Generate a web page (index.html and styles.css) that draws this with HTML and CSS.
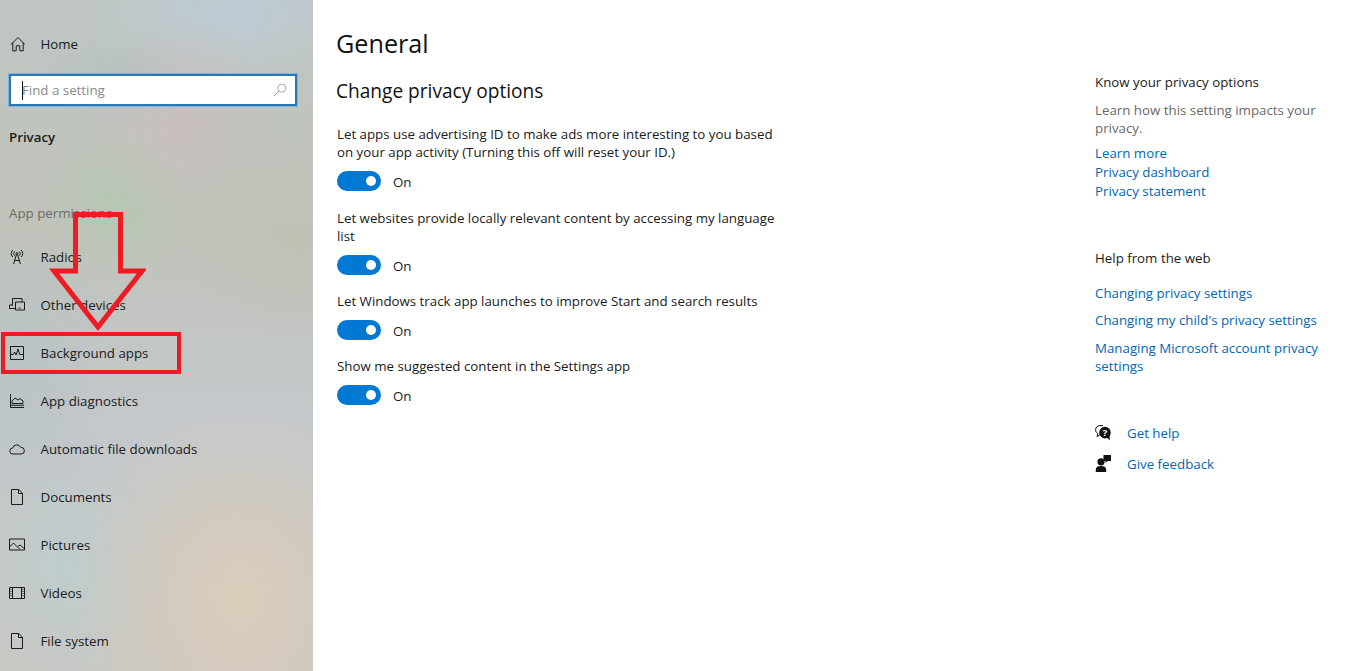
FILE: index.html
```html
<!DOCTYPE html>
<html lang="en">
<head>
<meta charset="utf-8">
<title>Settings - Privacy</title>
<link rel="stylesheet" href="styles.css">
</head>
<body>
<div class="app">
  <aside class="sidebar">
    <div class="nav-item home">
      <svg class="icon" viewBox="0 0 16 16"><path d="M2 8.500 9 1.500l6.800 7M3.800 6.500v8.300h3.400V9.800h3.600v5h3.400V6.500"/></svg>
      <span>Home</span>
    </div>
    <div class="search">
      <span class="caret"></span>
      <span class="placeholder">Find a setting</span>
      <svg class="search-icon" viewBox="0 0 14 14"><circle cx="8.800" cy="5.200" r="4"/><path d="M5.900 8 1 13"/></svg>
    </div>
    <div class="section-title">Privacy</div>
    <div class="group-label">App permissions</div>
    <nav class="nav-list">
      <div class="nav-item">
        <svg class="icon" viewBox="0 0 16 16"><circle cx="8" cy="4.600" r="1"/><path d="M7.400 5.600 4.600 15M8.600 5.600l2.800 9.400M5.600 11.500h4.800M5.600 6.600a3 3 0 0 1 0-4.200M10.400 2.400a3 3 0 0 1 0 4.200M3.800 8a5.200 5.200 0 0 1 0-7M12.200 1a5.200 5.200 0 0 1 0 7"/></svg>
        <span>Radios</span>
      </div>
      <div class="nav-item">
        <svg class="icon" viewBox="0 0 16 16"><path d="M3.500 8.500V1.500h9.500v3.500M3.500 8H.5v3.500h6M6.500 5h9v8h-9zM9.500 11h2"/></svg>
        <span>Other devices</span>
      </div>
      <div class="nav-item">
        <svg class="icon" viewBox="0 0 16 16"><path d="M1.500 1.500h13v13h-13zM2 9.500h2.200l1.400-2.500 1.500 3L9 4l1.800 5.500H14"/></svg>
        <span>Background apps</span>
      </div>
      <div class="nav-item">
        <svg class="icon" viewBox="0 0 16 16"><path d="M1.500 1v13.500H15M1.500 12.300H15M3 10.500V8l3-3 3 2 2-1.500 3 2.500v2.500z"/></svg>
        <span>App diagnostics</span>
      </div>
      <div class="nav-item">
        <svg class="icon" viewBox="0 0 16 16"><path d="M4 13a3 3 0 0 1-.4-6A4.400 4.400 0 0 1 11.800 6.400 3.300 3.300 0 0 1 12.400 13z"/></svg>
        <span>Automatic file downloads</span>
      </div>
      <div class="nav-item">
        <svg class="icon" viewBox="0 0 16 16"><path d="M2.500.5h7.300l3.700 3.700v11.300h-11zM9.500.5v4h4"/></svg>
        <span>Documents</span>
      </div>
      <div class="nav-item">
        <svg class="icon" viewBox="0 0 16 16"><path d="M.5 2h15v11H.5zM.5 10l4-4 6.500 6.500M9 9.500l2-1.500 4.500 3.800"/></svg>
        <span>Pictures</span>
      </div>
      <div class="nav-item">
        <svg class="icon" viewBox="0 0 16 16"><path d="M.5 2.500h15v11H.5zM3.500 2.500v11M12.500 2.500v11"/><path class="dots" d="M2 4v8M14 4v8"/></svg>
        <span>Videos</span>
      </div>
      <div class="nav-item">
        <svg class="icon" viewBox="0 0 16 16"><path d="M2.500.5h7.300l3.700 3.700v11.300h-11zM9.500.5v4h4"/></svg>
        <span>File system</span>
      </div>
    </nav>
  </aside>

  <main class="content">
    <section class="options">
      <h1>General</h1>
      <h2>Change privacy options</h2>
      <div class="option">
        <p>Let apps use advertising ID to make ads more interesting to you based on your app activity (Turning this off will reset your ID.)</p>
        <div class="toggle-row"><span class="toggle"></span><span class="state">On</span></div>
      </div>
      <div class="option">
        <p>Let websites provide locally relevant content by accessing my language list</p>
        <div class="toggle-row"><span class="toggle"></span><span class="state">On</span></div>
      </div>
      <div class="option">
        <p>Let Windows track app launches to improve Start and search results</p>
        <div class="toggle-row"><span class="toggle"></span><span class="state">On</span></div>
      </div>
      <div class="option">
        <p>Show me suggested content in the Settings app</p>
        <div class="toggle-row"><span class="toggle"></span><span class="state">On</span></div>
      </div>
    </section>

    <aside class="help">
      <h3>Know your privacy options</h3>
      <p class="muted">Learn how this setting impacts your privacy.</p>
      <ul class="links tight">
        <li><a>Learn more</a></li>
        <li><a>Privacy dashboard</a></li>
        <li><a>Privacy statement</a></li>
      </ul>
      <h3 class="web-title">Help from the web</h3>
      <ul class="links roomy">
        <li><a>Changing privacy settings</a></li>
        <li><a>Changing my child's privacy settings</a></li>
        <li><a>Managing Microsoft account privacy settings</a></li>
      </ul>
      <div class="actions">
        <div class="action">
          <svg class="action-icon" viewBox="0 0 16 16"><path class="outline" d="M8 .6H5C2.400.6.6 2.400.6 4.800c0 1.600.8 2.800 2 3.600l-.4 3.400 3.200-2.600"/><circle class="solid" cx="10" cy="7.600" r="5.800"/><path class="solid" d="M11.500 12l3.300 3.600-.2-5.600z"/><text class="q" x="10" y="11" text-anchor="middle">?</text></svg>
          <a>Get help</a>
        </div>
        <div class="action">
          <svg class="action-icon large" viewBox="0 0 16 17"><circle class="solid" cx="6" cy="6.800" r="3.600"/><path class="solid" d="M.8 17v-2.500c0-2.400 2-3.500 5.200-3.500s5.200 1.100 5.200 3.500V17zM8.500 0H16v6h-3.500l-2 2V6h-2z"/></svg>
          <a>Give feedback</a>
        </div>
      </div>
    </aside>
  </main>
</div>

<div class="highlight"></div>
<svg class="arrow" viewBox="0 0 100 122"><path d="M29.500 5.500H74.500V62H96L52 118 8 62H29.500z"/></svg>
</body>
</html>
```
FILE: styles.css
```css
* { box-sizing: border-box; }
html, body { margin: 0; height: 100%; overflow: hidden; }
body {
  font-family: "Open Sans", "Noto Sans", sans-serif;
  font-size: 13.3px;
  color: #1a1a1a;
  background: #fff;
}
.app { display: flex; height: 671px; }

.sidebar {
  width: 313px;
  flex: none;
  padding: 20px 0 0 9px;
  color: #1b1b1b;
  background:
    radial-gradient(ellipse 100px 110px at 180px 125px, rgba(206,190,190,.65), transparent),
    radial-gradient(ellipse 70px 80px at 120px 200px, rgba(176,200,176,.65), transparent),
    radial-gradient(ellipse 150px 70px at 230px 15px, rgba(190,203,215,.9), transparent),
    radial-gradient(ellipse 90px 50px at 130px 80px, rgba(176,190,196,.7), transparent),
    radial-gradient(ellipse 170px 200px at 240px 600px, rgba(218,204,186,1), transparent),
    radial-gradient(ellipse 90px 120px at 70px 570px, rgba(190,205,205,.9), transparent),
    radial-gradient(ellipse 120px 100px at 300px 240px, rgba(192,192,180,.8), transparent),
    radial-gradient(ellipse 90px 150px at 20px 370px, rgba(182,194,196,.8), transparent),
    linear-gradient(180deg, #bfc6c2 0%, #c0c3ba 35%, #c4c8cc 62%, #c8c8c4 100%);
}
.nav-item {
  display: flex;
  align-items: center;
  height: 48px;
  gap: 15.500px;
  white-space: nowrap;
}
.icon {
  width: 16px;
  height: 16px;
  flex: none;
  fill: none;
  stroke: #1b1b1b;
  stroke-width: 1;
}
.dots { stroke-dasharray: 1 1; }
.search {
  display: flex;
  align-items: center;
  width: 288px;
  height: 32px;
  margin-top: 6px;
  padding: 0 8px 0 11px;
  background: #fff;
  border: 2px solid #2a78b4;
  outline: 1px solid #7cb4de;
}
.caret { width: 1px; height: 19px; background: #111; flex: none; }
.placeholder { flex: 1; color: #8a8a8a; margin-left: -1px; }
.search-icon { width: 14px; height: 14px; fill: none; stroke: #a8a8a8; stroke-width: 1; }
.section-title { margin-top: 21px; font-weight: 600; line-height: 20px; }
.group-label { margin-top: 56px; color: #6b6d68; line-height: 20px; }
.nav-list { margin-top: 10px; }

.content { flex: 1; display: flex; min-width: 0; }
.options { width: 782px; padding-left: 23px; }
h1 { margin: 24px 0 0; font-size: 25.200px; font-weight: 400; line-height: 38px; color: #111; }
h2 { margin: 15px 0 0; font-size: 19.100px; font-weight: 400; line-height: 28px; color: #111; }
.option { width: 445px; margin-left: 1px; margin-top: 16px; }
.option p { margin: 0; line-height: 18px; }
.options h2 + .option { margin-top: 20px; margin-bottom: 17px; }
.toggle-row { display: flex; align-items: center; gap: 12px; margin-top: 9px; height: 22px; }
.state { padding-top: 2px; }
.toggle {
  position: relative;
  width: 44px;
  height: 20px;
  border-radius: 10px;
  background: #0078d4;
}
.toggle::after {
  content: "";
  position: absolute;
  right: 5px;
  top: 5px;
  width: 10px;
  height: 10px;
  border-radius: 50%;
  background: #fff;
}

.help { flex: 1; }
.help h3 { margin: 72px 0 0; font-size: 13.300px; font-weight: 400; line-height: 20px; }
.help h3.web-title { margin-top: 47px; }
.muted { margin: 9px 0 0; width: 235px; color: #6a6a6a; line-height: 18px; }
.links { list-style: none; margin: 0; padding: 0; width: 235px; }
.links a, .action a { color: #0067b8; }
.tight { margin-top: 7px; }
.tight li { line-height: 19px; }
.roomy { margin-top: 16px; }
.roomy li { line-height: 18px; margin-bottom: 9.300px; }
.actions { margin-top: 42.500px; }
.action { display: flex; align-items: center; gap: 16px; height: 31px; }
.action-icon { width: 16px; height: 16px; flex: none; }
.action-icon.large { height: 17px; }
.solid { fill: #111; }
.outline { fill: none; stroke: #111; stroke-width: 1; }
.q { fill: #fff; font-size: 9.500px; font-weight: 700; font-family: "Open Sans", sans-serif; }

.highlight {
  position: absolute;
  left: 1px;
  top: 332px;
  width: 180px;
  height: 42px;
  border: 4px solid #ed1c24;
}
.arrow {
  position: absolute;
  left: 46px;
  top: 209px;
  width: 100px;
  height: 122px;
  fill: none;
  stroke: #ed1c24;
  stroke-width: 5;
}
```
